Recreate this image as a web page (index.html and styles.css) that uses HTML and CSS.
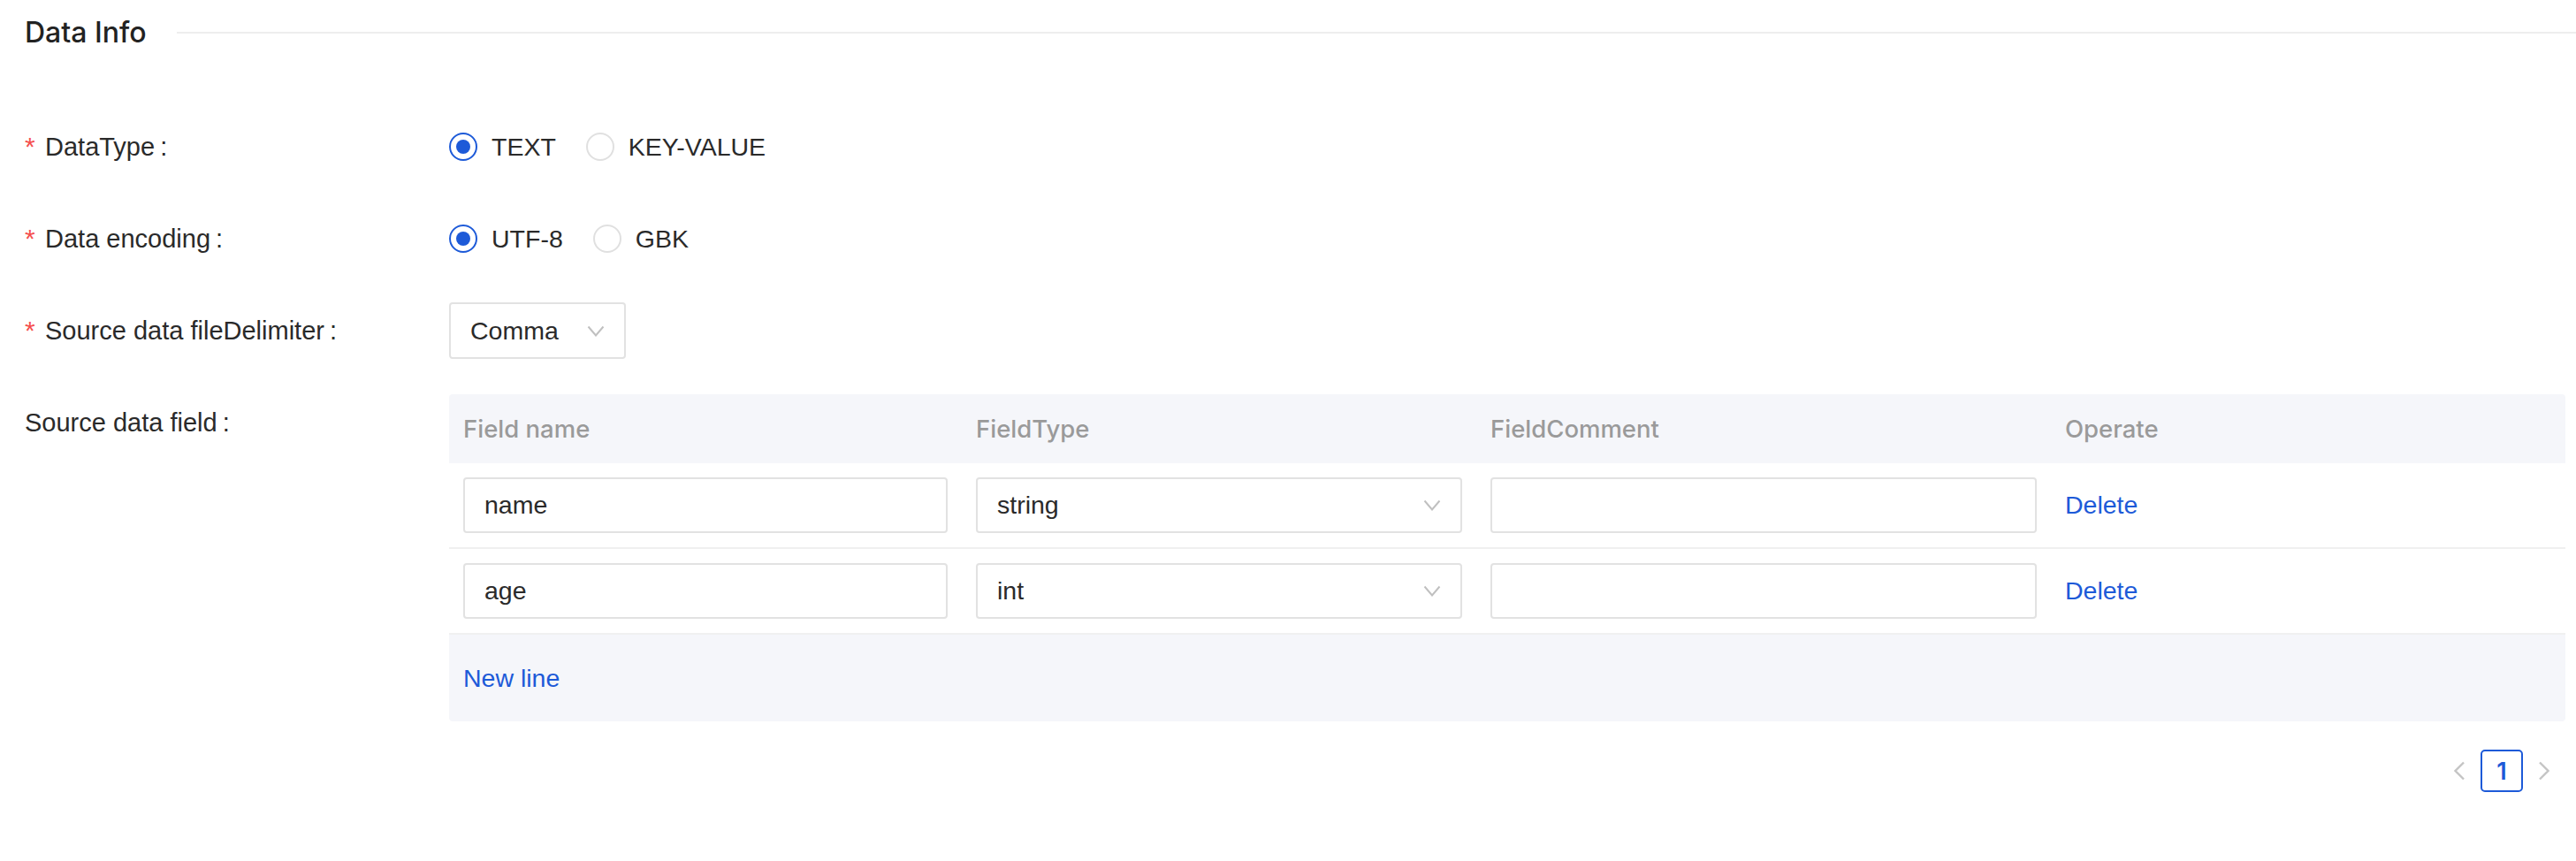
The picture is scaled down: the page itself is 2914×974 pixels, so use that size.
FILE: index.html
```html
<!DOCTYPE html>
<html lang="en">
<head>
<meta charset="utf-8">
<title>Data Info</title>
<link rel="stylesheet" href="styles.css">
</head>
<body>
<div class="page">
  <div class="section-title">
    <h2>Data Info</h2>
    <div class="rule"></div>
  </div>

  <form class="form">
    <div class="item">
      <div class="label"><span class="req">*</span>DataType<span class="colon">:</span></div>
      <div class="control">
        <label class="radio"><span class="dot checked"></span><span class="radio-text">TEXT</span></label>
        <label class="radio"><span class="dot"></span><span class="radio-text">KEY-VALUE</span></label>
      </div>
    </div>

    <div class="item">
      <div class="label"><span class="req">*</span>Data encoding<span class="colon">:</span></div>
      <div class="control">
        <label class="radio"><span class="dot checked"></span><span class="radio-text">UTF-8</span></label>
        <label class="radio"><span class="dot"></span><span class="radio-text">GBK</span></label>
      </div>
    </div>

    <div class="item">
      <div class="label"><span class="req">*</span>Source data fileDelimiter<span class="colon">:</span></div>
      <div class="control">
        <div class="select select-small">
          <span class="select-value">Comma</span>
          <svg class="caret" width="20" height="13" viewBox="0 0 20 13"><path d="M1.5 1.5 L10 11.5 L18.5 1.5" fill="none" stroke="#c0c0c0" stroke-width="2"/></svg>
        </div>
      </div>
    </div>

    <div class="item item-table">
      <div class="label">Source data field<span class="colon">:</span></div>
      <div class="control control-block">
        <div class="table">
          <div class="thead">
            <div class="th">Field name</div>
            <div class="th">FieldType</div>
            <div class="th">FieldComment</div>
            <div class="th">Operate</div>
          </div>
          <div class="trow">
            <div class="td"><input class="input" type="text" value="name"></div>
            <div class="td">
              <div class="select">
                <span class="select-value">string</span>
                <svg class="caret" width="20" height="13" viewBox="0 0 20 13"><path d="M1.5 1.5 L10 11.5 L18.5 1.5" fill="none" stroke="#c0c0c0" stroke-width="2"/></svg>
              </div>
            </div>
            <div class="td"><input class="input" type="text" value=""></div>
            <div class="td"><a class="link">Delete</a></div>
          </div>
          <div class="trow">
            <div class="td"><input class="input" type="text" value="age"></div>
            <div class="td">
              <div class="select">
                <span class="select-value">int</span>
                <svg class="caret" width="20" height="13" viewBox="0 0 20 13"><path d="M1.5 1.5 L10 11.5 L18.5 1.5" fill="none" stroke="#c0c0c0" stroke-width="2"/></svg>
              </div>
            </div>
            <div class="td"><input class="input" type="text" value=""></div>
            <div class="td"><a class="link">Delete</a></div>
          </div>
          <div class="tfoot"><a class="link">New line</a></div>
        </div>

        <div class="pagination">
          <span class="page-nav">
            <svg width="14" height="22" viewBox="0 0 14 22"><path d="M12 1.5 L2.5 11 L12 20.5" fill="none" stroke="#c4c4c4" stroke-width="2.4"/></svg>
          </span>
          <span class="page-item active">1</span>
          <span class="page-nav">
            <svg width="14" height="22" viewBox="0 0 14 22"><path d="M2 1.5 L11.5 11 L2 20.5" fill="none" stroke="#c4c4c4" stroke-width="2.4"/></svg>
          </span>
        </div>
      </div>
    </div>
  </form>
</div>
</body>
</html>
```

FILE: styles.css
```css
* {
  box-sizing: border-box;
}

body {
  margin: 0;
  background: #ffffff;
  font-family: "Liberation Sans", Arial, sans-serif;
  font-size: 28.5px;
  color: #2a2a2a;
}

.page {
  padding: 12px 0 0 28px;
}

.section-title {
  display: flex;
  align-items: center;
  height: 50px;
}

.section-title h2 {
  margin: 0;
  font-family: Inter, "Liberation Sans", sans-serif;
  font-weight: 500;
  font-size: 32px;
  line-height: 50px;
  color: #222222;
}

.rule {
  flex: 1;
  height: 2px;
  background: #eeeeee;
  margin-left: 34px;
}

.form {
  margin-top: 72px;
  padding-right: 12px;
}

.item {
  display: flex;
  margin-bottom: 40px;
}

.label {
  flex: none;
  width: 480px;
  height: 64px;
  display: flex;
  align-items: center;
  white-space: nowrap;
  font-size: 29px;
}

.req {
  display: inline-block;
  width: 23px;
  color: #f5504f;
  font-size: 30px;
}

.colon {
  margin-left: 6px;
}

.control {
  flex: 1;
  min-height: 64px;
  display: flex;
  align-items: center;
}

.control-block {
  flex-direction: column;
  align-items: stretch;
}

/* radios */
.radio {
  display: inline-flex;
  align-items: center;
  margin-right: 18px;
}

.dot {
  width: 32px;
  height: 32px;
  border-radius: 50%;
  border: 2px solid #e0e0e0;
  display: inline-flex;
  align-items: center;
  justify-content: center;
}

.dot.checked {
  border-color: #1d5ad8;
}

.dot.checked::after {
  content: "";
  width: 16px;
  height: 16px;
  border-radius: 50%;
  background: #1d5ad8;
}

.radio-text {
  padding: 0 16px;
}

/* select */
.select {
  height: 63px;
  border: 2px solid #e2e2e2;
  border-radius: 4px;
  padding: 0 22px;
  display: flex;
  align-items: center;
  justify-content: space-between;
  background: #fff;
}

.select-small {
  width: 200px;
  height: 64px;
}

.caret {
  flex: none;
}

/* table */
.table {
  width: 100%;
}

.thead,
.trow {
  display: grid;
  grid-template-columns: 580px 582px 650px 1fr;
  align-items: center;
}

.thead {
  height: 78px;
  background: #f5f6fa;
  border-radius: 4px 4px 0 0;
}

.th {
  padding: 0 16px;
  font-family: Inter, "Liberation Sans", sans-serif;
  font-weight: 500;
  font-size: 27.5px;
  color: #9a9a9a;
}

.trow {
  padding: 16px 0;
  border-bottom: 2px solid #f0f0f0;
}

.td {
  padding: 0 16px;
}

.input {
  display: block;
  width: 100%;
  height: 63px;
  border: 2px solid #e2e2e2;
  border-radius: 4px;
  padding: 0 22px;
  font-family: "Liberation Sans", Arial, sans-serif;
  font-size: 28.5px;
  color: #2a2a2a;
  background: #fff;
  outline: none;
}

.link {
  color: #1d5ad8;
  text-decoration: none;
  cursor: pointer;
}

.tfoot {
  height: 98px;
  background: #f5f6fa;
  display: flex;
  align-items: center;
  padding: 0 16px;
  border-radius: 0 0 4px 4px;
}

/* pagination */
.pagination {
  display: flex;
  justify-content: flex-end;
  margin-top: 32px;
}

.page-nav,
.page-item {
  width: 48px;
  height: 48px;
  display: flex;
  align-items: center;
  justify-content: center;
}

.page-item {
  border: 2px solid #1d5ad8;
  border-radius: 5px;
  color: #1d5ad8;
  font-family: Inter, "Liberation Sans", sans-serif;
  font-weight: 600;
  font-size: 27px;
}
```
